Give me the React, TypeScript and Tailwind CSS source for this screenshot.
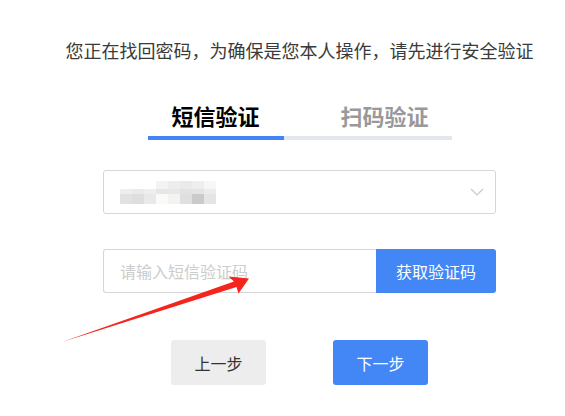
import React from "react";

const font = { fontFamily: '"Noto Sans CJK SC", "Noto Sans", sans-serif' };

function Blur() {
  const top = ["#ffffff", "#ffffff", "#ffffff", "#f3f3f3", "#ededed", "#eaeaea", "#eeeeee", "#f7f7f7"];
  const mid = ["#eeeeee", "#e9e9e9", "#eeeeee", "#e6e6e6", "#e8e8e8", "#e2e2e2", "#e4e4e4", "#ececec"];
  const bot = ["#e2e2e2", "#dedede", "#e8e9ea", "#fafaf8", "#f3f3f1", "#dfdfdf", "#cacaca", "#e5e5e5"];
  return (
    <div className="flex flex-col">
      <div className="flex h-[8px]">
        {top.map((c, i) => (
          <div key={i} className="w-[12px]" style={{ background: c }} />
        ))}
      </div>
      <div className="flex h-[5px]">
        {mid.map((c, i) => (
          <div key={i} className="w-[12px]" style={{ background: c }} />
        ))}
      </div>
      <div className="flex h-[10px]">
        {bot.map((c, i) => (
          <div key={i} className="w-[12px]" style={{ background: c }} />
        ))}
      </div>
    </div>
  );
}

export default function App() {
  return (
    <div className="relative w-[565px] h-[416px] bg-white overflow-hidden" style={font}>
      <div className="ml-[66px] w-[467px] flex flex-col items-center pt-[38px]">
        <div className="text-[18px] leading-[24px] text-[#3a3a3a] whitespace-nowrap">
          您正在找回密码，为确保是您本人操作，请先进行安全验证
        </div>

        <div className="mt-[38px] flex w-[304px]">
          <div className="w-[136px] border-b-4 border-[#4285f4] text-center text-[22px] leading-[30px] pb-[6px] font-bold text-black">
            短信验证
          </div>
          <div className="flex-1 border-b-4 border-[#e4e7ed] pl-[57px] text-[22px] leading-[30px] pb-[6px] font-bold text-[#999999]">
            扫码验证
          </div>
        </div>

        <div className="mt-[30px] w-[393px] h-[44px] rounded-[3px] border border-[#d6d6d6] flex items-center justify-between pl-[16px] pr-[11px]">
          <Blur />
          <svg width="14" height="8" viewBox="0 0 14 8" fill="none">
            <path d="M1 1 L7 7 L13 1" stroke="#c5c8d6" strokeWidth="1.2" />
          </svg>
        </div>

        <div className="mt-[35px] w-[393px] h-[44px] flex">
          <div className="flex-1 border border-r-0 border-[#d6d6d6] rounded-l-[3px] flex items-center pl-[16px] text-[16px] text-[#cccccc]">
            请输入短信验证码
          </div>
          <button className="w-[120px] h-full bg-[#4287f5] rounded-r-[3px] text-white text-[16px]">
            获取验证码
          </button>
        </div>

        <div className="mt-[47px] flex gap-[67px]">
          <button className="w-[95px] h-[45px] bg-[#ededed] rounded-[3px] text-[16px] text-[#333333]">
            上一步
          </button>
          <button className="w-[95px] h-[45px] bg-[#4287f5] rounded-[3px] text-[16px] text-white">
            下一步
          </button>
        </div>
      </div>

      <svg className="absolute left-0 top-0 pointer-events-none" width="565" height="416" viewBox="0 0 565 416">
        <polygon
          points="62,342 234,281.5 228.5,276.5 249,278.5 238.5,293.5 236.5,287"
          fill="#f5241c"
        />
      </svg>
    </div>
  );
}
